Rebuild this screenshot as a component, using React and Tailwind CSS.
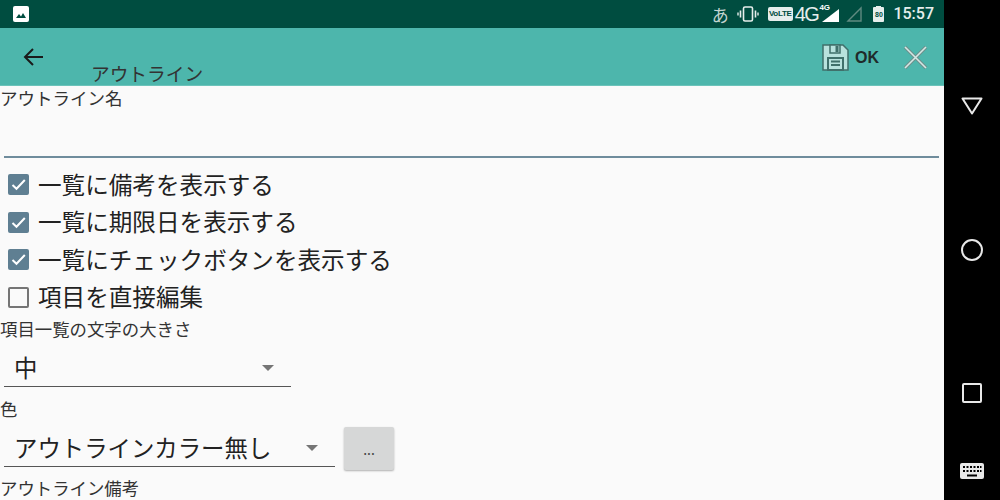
const font = { fontFamily: '"Noto Sans CJK JP", Roboto, sans-serif' };

function CheckRow({ label, checked }) {
    return (
        <div className="flex items-center h-[37.5px] pl-[8px]">
            {checked ? (
                <div className="w-[21px] h-[21px] rounded-[2px] bg-[#5f7f92] flex items-center justify-center">
                    <svg width="15" height="15" viewBox="0 0 15 15" fill="none">
                        <path d="M1.500 8l4 3.800L13.800 3" stroke="#fff" strokeWidth="2" />
                    </svg>
                </div>
            ) : (
                <div className="w-[21px] h-[21px] rounded-[2px] border-2 border-[#757575]" />
            )}
            <span className="ml-[9px] text-[23.6px] leading-none text-[#222]">{label}</span>
        </div>
    );
}

function SpinnerArrow() {
    return <div className="w-0 h-0 border-x-[6px] border-x-transparent border-t-[6px] border-t-[#757575]" />;
}

function StatusBar() {
    return (
        <div className="h-[28px] shrink-0 bg-[#004d40] flex items-center justify-between pl-[13px] pr-[10px] text-[#dfe9e6]">
            <svg width="16" height="16" viewBox="0 0 16 16">
                <rect width="16" height="16" rx="2" fill="#fff" />
                <path d="M3 12l3-4 2 2.500 2-3.500 3 5z" fill="#004d40" />
            </svg>
            <div className="flex items-center">
                <span className="text-[17px] leading-none text-[#c4d4d0]">あ</span>
                <svg className="ml-[8px]" width="22" height="16" viewBox="0 0 22 16" fill="none" stroke="#e6eeec">
                    <rect x="6.500" y="1" width="9" height="14" rx="1.500" strokeWidth="1.600" />
                    <path d="M3.500 4.500v7M18.500 4.500v7" strokeWidth="1.600" />
                    <path d="M1 6.500v3M21 6.500v3" strokeWidth="1.400" />
                </svg>
                <span className="ml-[9px] bg-[#e6eeec] text-[#004d40] text-[8px] font-bold leading-[14px] h-[14px] w-[25px] rounded-[2px] text-center tracking-[-0.3px]" style={{ fontFamily: '"Liberation Sans", sans-serif' }}>VoLTE</span>
                <span className="ml-[2px] text-[20px] leading-none text-[#e6eeec] tracking-[-1.5px]" style={{ fontFamily: '"Liberation Sans", sans-serif' }}>4G</span>
                <div className="relative w-[21px] h-[18px] ml-[1px]">
                    <span className="absolute left-0 top-[-1px] text-[8px] font-bold leading-none text-white" style={{ fontFamily: '"Liberation Sans", sans-serif' }}>4G</span>
                    <svg className="absolute left-0 top-0" width="21" height="18" viewBox="0 0 21 18">
                        <path d="M3 17L20 4v13z" fill="#fff" />
                    </svg>
                </div>
                <svg className="ml-[6px]" width="17" height="16" viewBox="0 0 17 16" fill="none" stroke="#5f8a80" strokeWidth="1.400">
                    <path d="M2 15L15 2v13z" />
                </svg>
                <div className="ml-[10px] relative w-[11px] h-[15px] bg-[#e6eeec] rounded-[1px] flex items-center justify-center">
                    <div className="absolute top-[-1px] w-[5px] h-[1px] bg-[#e6eeec]" />
                    <span className="text-[7px] font-bold leading-none text-[#004d40]" style={{ fontFamily: '"Liberation Sans", sans-serif' }}>80</span>
                </div>
                <span className="ml-[9px] text-[16px] font-medium leading-none text-[#e6eeec]" style={{ fontFamily: 'Roboto, sans-serif' }}>15:57</span>
            </div>
        </div>
    );
}

function Toolbar() {
    return (
        <div className="h-[58px] shrink-0 bg-[#4db6ac] border-b border-[#6cc3ba] relative flex items-start justify-between">
            <div className="flex">
                <svg className="ml-[23px] mt-[19px]" width="20" height="20" viewBox="0 0 20 20" fill="none" stroke="#1a1a1a" strokeWidth="2">
                    <path d="M20 10H2M10 2l-8 8 8 8" />
                </svg>
                <span className="ml-[48px] mt-[33px] text-[18.7px] leading-[24px] text-[#333]">アウトライン</span>
            </div>
            <div className="flex items-start">
                <svg className="mt-[15px]" width="29" height="29" viewBox="0 0 29 29" fill="#b8e2dd" stroke="#40706b" strokeWidth="1.500">
                    <path d="M2 2h20l5 5v20H2z" />
                    <path d="M9 2h10v8H9z" fill="#b8e2dd" />
                    <path d="M14.500 3h3v6h-3z" fill="#40706b" stroke="none" />
                    <path d="M7 15h15v12H7zM10 18.500h9M10 22h9" fill="#b8e2dd" strokeWidth="2" />
                </svg>
                <span className="ml-[5px] mt-[18px] text-[16px] leading-[24px] font-bold text-[#1f2b2a]" style={{ fontFamily: '"Liberation Sans", sans-serif' }}>OK</span>
                <svg className="ml-[24px] mr-[16px] mt-[17px]" width="25" height="25" viewBox="0 0 25 25" fill="none">
                    <path d="M2 2l21 21M23 2L2 23" stroke="#6f8f8b" strokeWidth="3.400" />
                    <path d="M2 2l21 21M23 2L2 23" stroke="#d5e8e5" strokeWidth="1.600" />
                </svg>
            </div>
        </div>
    );
}

function NavBar() {
    return (
        <div className="w-[56px] h-full bg-black flex flex-col items-center">
            <svg className="mt-[97px]" width="22" height="18" viewBox="0 0 22 18" fill="none" stroke="#e8e8e8" strokeWidth="2">
                <path d="M1.500 1.500h19L11 16.500z" strokeLinejoin="round" />
            </svg>
            <svg className="mt-[124px]" width="22" height="22" viewBox="0 0 22 22" fill="none" stroke="#e8e8e8" strokeWidth="2">
                <circle cx="11" cy="11" r="10" />
            </svg>
            <svg className="mt-[122px]" width="20" height="20" viewBox="0 0 20 20" fill="none" stroke="#e8e8e8" strokeWidth="2">
                <rect x="1" y="1" width="18" height="18" rx="1" />
            </svg>
            <svg className="mt-[60px]" width="24" height="16" viewBox="0 0 24 16">
                <rect width="24" height="16" rx="2" fill="#e8e8e8" />
                <path d="M3 3h2v2H3zM6.500 3h2v2h-2zM10 3h2v2h-2zM13.500 3h2v2h-2zM17 3h2v2h-2zM20 3h1.500v2H20zM3 7h2v2H3zM6.500 7h2v2h-2zM10 7h2v2h-2zM13.500 7h2v2h-2zM17 7h2v2h-2zM20 7h1.500v2H20zM7 11.500h10v2H7z" fill="#000" />
            </svg>
        </div>
    );
}

export default function App() {
    return (
        <div className="w-[1000px] h-[500px] flex overflow-hidden bg-black" style={font}>
            <div className="w-[944px] h-full flex flex-col bg-[#fafafa] overflow-hidden">
                <StatusBar />
                <Toolbar />

                <div className="text-[17.5px] leading-[24px] text-[#333] shrink-0 h-[24px]">アウトライン名</div>
                <div className="h-[48px] shrink-0 ml-[4px] mr-[5px] border-b-2 border-[#6f8c9c]" />

                <div className="mt-[8px] shrink-0">
                    <CheckRow label="一覧に備考を表示する" checked />
                    <CheckRow label="一覧に期限日を表示する" checked />
                    <CheckRow label="一覧にチェックボタンを表示する" checked />
                    <CheckRow label="項目を直接編集" />
                </div>

                <div className="text-[17.4px] leading-[24px] text-[#333] mt-[1px] shrink-0">項目一覧の文字の大きさ</div>
                <div className="ml-[4px] w-[287px] h-[46px] shrink-0 pt-[8px] border-b border-[#555] flex items-center justify-between pl-[10px] pr-[17px]">
                    <span className="text-[23.4px] leading-none text-[#222]">中</span>
                    <SpinnerArrow />
                </div>

                <div className="text-[17.4px] leading-[24px] text-[#333] mt-[10px] shrink-0">色</div>
                <div className="flex items-start shrink-0">
                    <div className="ml-[4px] w-[331px] h-[46px] pt-[9px] border-b border-[#555] flex items-center justify-between pl-[10px] pr-[17px]">
                        <span className="text-[23.4px] leading-none text-[#222]">アウトラインカラー無し</span>
                        <SpinnerArrow />
                    </div>
                    <button className="ml-[9px] mt-[6px] w-[50px] h-[43px] bg-[#d6d7d7] rounded-[2px] shadow-[0_1px_2px_rgba(0,0,0,0.3)] text-[14px] text-[#444] leading-none">...</button>
                </div>

                <div className="text-[17.4px] leading-[22px] text-[#333] mt-[7px] shrink-0">アウトライン備考</div>
            </div>
            <NavBar />
        </div>
    );
}
